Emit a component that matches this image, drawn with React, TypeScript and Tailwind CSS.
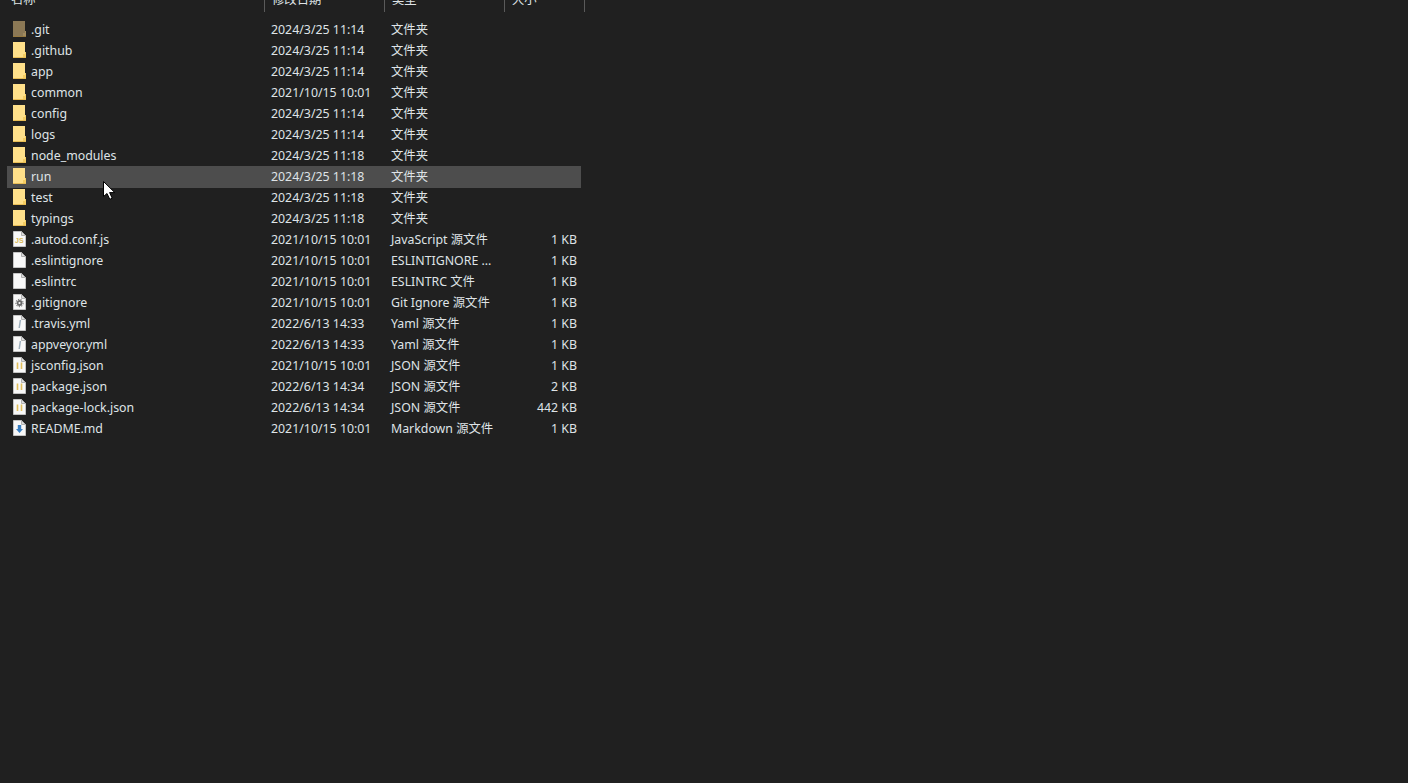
type Kind = 'git' | 'folder' | 'js' | 'blank' | 'gear' | 'yml' | 'json' | 'md';

interface Row {
  name: string;
  date: string;
  type: string;
  size?: string;
  icon: Kind;
  hover?: boolean;
}

const rows: Row[] = [
  { name: '.git', date: '2024/3/25 11:14', type: '文件夹', icon: 'git' },
  { name: '.github', date: '2024/3/25 11:14', type: '文件夹', icon: 'folder' },
  { name: 'app', date: '2024/3/25 11:14', type: '文件夹', icon: 'folder' },
  { name: 'common', date: '2021/10/15 10:01', type: '文件夹', icon: 'folder' },
  { name: 'config', date: '2024/3/25 11:14', type: '文件夹', icon: 'folder' },
  { name: 'logs', date: '2024/3/25 11:14', type: '文件夹', icon: 'folder' },
  { name: 'node_modules', date: '2024/3/25 11:18', type: '文件夹', icon: 'folder' },
  { name: 'run', date: '2024/3/25 11:18', type: '文件夹', icon: 'folder', hover: true },
  { name: 'test', date: '2024/3/25 11:18', type: '文件夹', icon: 'folder' },
  { name: 'typings', date: '2024/3/25 11:18', type: '文件夹', icon: 'folder' },
  { name: '.autod.conf.js', date: '2021/10/15 10:01', type: 'JavaScript 源文件', size: '1 KB', icon: 'js' },
  { name: '.eslintignore', date: '2021/10/15 10:01', type: 'ESLINTIGNORE ...', size: '1 KB', icon: 'blank' },
  { name: '.eslintrc', date: '2021/10/15 10:01', type: 'ESLINTRC 文件', size: '1 KB', icon: 'blank' },
  { name: '.gitignore', date: '2021/10/15 10:01', type: 'Git Ignore 源文件', size: '1 KB', icon: 'gear' },
  { name: '.travis.yml', date: '2022/6/13 14:33', type: 'Yaml 源文件', size: '1 KB', icon: 'yml' },
  { name: 'appveyor.yml', date: '2022/6/13 14:33', type: 'Yaml 源文件', size: '1 KB', icon: 'yml' },
  { name: 'jsconfig.json', date: '2021/10/15 10:01', type: 'JSON 源文件', size: '1 KB', icon: 'json' },
  { name: 'package.json', date: '2022/6/13 14:34', type: 'JSON 源文件', size: '2 KB', icon: 'json' },
  { name: 'package-lock.json', date: '2022/6/13 14:34', type: 'JSON 源文件', size: '442 KB', icon: 'json' },
  { name: 'README.md', date: '2021/10/15 10:01', type: 'Markdown 源文件', size: '1 KB', icon: 'md' },
];

const FileIcon = ({ kind }: { kind: Kind }) => {
  if (kind === 'git' || kind === 'folder') {
    const git = kind === 'git';
    return (
      <svg width="13" height="16" viewBox="0 0 13 16" className="shrink-0">
        <path d="M0 0H12V10H13V16H0Z" fill={git ? '#8b7855' : '#ffe08a'} />
        <path d="M0 15H13V16H0ZM12 10H13V16H12Z" fill={git ? '#96793f' : '#e8bd55'} />
        <path d="M10 15V12H12V10H13V15Z" fill={git ? '#a08a5e' : '#f5cd62'} />
      </svg>
    );
  }
  return (
    <svg width="13" height="16" viewBox="0 0 13 16" className="shrink-0">
      <path d="M0.5 0.5H8.5L12.5 4.5V15.5H0.5Z" fill="#f8f8f8" stroke="#c4c4c4" strokeWidth="1" />
      <path d="M8.5 0.5V4.5H12.5Z" fill="#dcdcdc" stroke="#b0b0b0" strokeWidth="1" />
      {kind === 'js' && (
        <text x="2" y="12" fontSize="7" fontWeight="700" fill="#d9b955" fontFamily="'Liberation Sans', sans-serif">JS</text>
      )}
      {kind === 'gear' && (
        <>
          <circle cx="6.5" cy="9" r="2" fill="none" stroke="#6a6a6a" strokeWidth="1.8" />
          <circle cx="6.5" cy="9" r="3.6" fill="none" stroke="#808080" strokeWidth="1.2" strokeDasharray="1.3 1.2" />
        </>
      )}
      {kind === 'yml' && <path d="M7.4 5L6.2 13" stroke="#9fb0bd" strokeWidth="1.5" fill="none" />}
      {kind === 'json' && <path d="M4.5 5.5V12M8.5 5.5V12" stroke="#e2bf5c" strokeWidth="1.6" fill="none" />}
      {kind === 'md' && <path d="M4.8 5H8.2V9H10L6.5 13L3 9H4.8Z" fill="#3a80c4" />}
    </svg>
  );
};

export default function App() {
  return (
    <div className="relative h-[783px] overflow-hidden bg-[#202020] font-['Noto_Sans','Noto_Sans_CJK_SC',sans-serif] text-[12.35px] text-[#dfe3e6]">
      <div className="flex h-[12px] w-[585px] overflow-hidden">
        {[
          ['名称', 'w-[265px]', 'pl-[11px]'],
          ['修改日期', 'w-[120px]', 'pl-[7px]'],
          ['类型', 'w-[120px]', 'pl-[7px]'],
          ['大小', 'w-[80px]', 'pl-[7px]'],
        ].map(([label, width, pad]) => (
          <div key={label} className={`${width} ${pad} flex h-full items-end border-r border-[#5a5a5a]`}>
            <span className="mb-[3px] block leading-[18px]">{label}</span>
          </div>
        ))}
      </div>

      <div className="mt-[7px] ml-[7px] flex w-[574px] flex-col">
        {rows.map((row) => (
          <div
            key={row.name}
            className={`flex items-center ${row.hover ? 'mb-[-1px] h-[22px] bg-[#4d4d4d] pb-px' : 'h-[21px]'}`}
          >
            <div className="flex w-[257px] items-center gap-[5px] pl-[6px]">
              <FileIcon kind={row.icon} />
              <span className="pt-[2px]">{row.name}</span>
            </div>
            <div className="w-[120px] pt-[2px] pl-[7px] whitespace-nowrap">{row.date}</div>
            <div className="w-[120px] pt-[2px] pl-[7px] whitespace-nowrap">{row.type}</div>
            <div className="w-[77px] pt-[2px] pr-[4px] text-right whitespace-nowrap">{row.size}</div>
          </div>
        ))}
      </div>

      {/* mouse pointer */}
      <svg width="13" height="19" viewBox="0 0 13 19" className="absolute top-[181px] left-[103px]">
        <path d="M0.5 0.5V15.5L4 12.5L6.8 18.3L9.2 17.2L6.6 11.6H11.8Z" fill="#fff" stroke="#000" strokeWidth="1" />
      </svg>
    </div>
  );
}
